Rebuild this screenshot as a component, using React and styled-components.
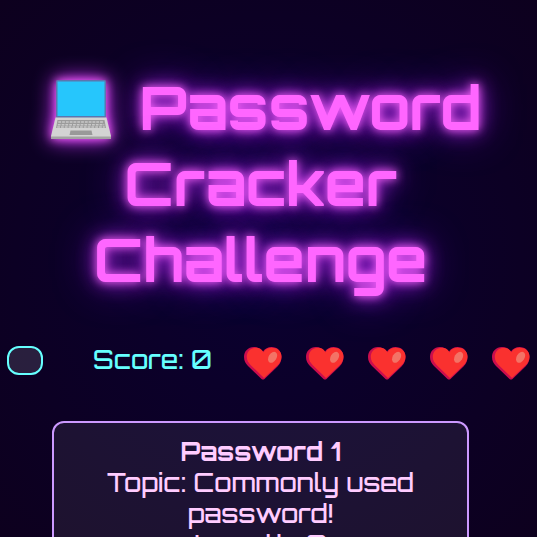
import React from "react";
import styled, { createGlobalStyle } from "styled-components";

const GlobalStyle = createGlobalStyle`
  html { background: #0d0020; }
  body { margin: 0; overflow: hidden; font-family: "Orbitron", "DejaVu Sans", sans-serif; }
  * { box-sizing: border-box; }
`;

const Page = styled.main`
  display: flex;
  flex-direction: column;
  align-items: center;
  height: 100vh;
  overflow: hidden;
  padding: 69px 16px 0 0;
  background: radial-gradient(circle at center, #0a0030 0%, #0d001e 100%);
`;

const Title = styled.h1`
  flex: none;
  width: 88%;
  margin: 0;
  font-size: 60px;
  line-height: 76px;
  font-weight: 700;
  text-align: center;
  color: #ff66ff;
  text-shadow: 0 0 10px #ff66ff, 0 0 20px #cc33ff, 0 0 40px #6600cc;
`;

const LaptopIcon = styled.svg`
  width: 60px;
  height: 60px;
  margin: 0 10px 0 12px;
  vertical-align: -9px;
  overflow: visible;
  filter: drop-shadow(0 0 5px #ff66ff) drop-shadow(0 0 10px #cc33ff);
`;

const StatusBar = styled.section`
  display: flex;
  flex: none;
  align-items: center;
  justify-content: center;
  height: 48px;
  margin-top: 39px;
  color: #66ffff;
`;

const Timer = styled.div`
  flex: none;
  width: 36px;
  height: 29px;
  margin-right: 50px;
  border: 2px solid #66ffff;
  border-radius: 12px;
  background: rgba(255, 255, 255, 0.12);
`;

const Score = styled.span`
  flex: none;
  margin-right: 32px;
  font-size: 25px;
  line-height: 32px;
  font-weight: 500;
  white-space: nowrap;
`;

const Lives = styled.div`
  display: flex;
  flex: none;
  gap: 24px;
  padding-top: 6px;
  margin-right: -16px;
`;

const HeartIcon = styled.svg`
  display: block;
  width: 38px;
  height: 33px;
`;

const Card = styled.section`
  flex: none;
  width: 80%;
  min-height: 240px;
  margin-top: 37px;
  padding: 13px 32px;
  border: 2px solid #cc99ff;
  border-radius: 12px;
  background: rgba(255, 255, 255, 0.07);
  color: #ffccff;
  font-size: 25px;
  line-height: 31px;
  font-weight: 500;
  text-align: center;
`;

const Line = styled.p`
  margin: 0;
`;

const lives = [1, 2, 3, 4, 5];

function Laptop() {
  return (
    <LaptopIcon viewBox="0 0 60 60" role="img" aria-label="Laptop">
      <rect x="5" y="1" width="50" height="38" rx="1.5" fill="#5b76ae" />
      <rect x="6.5" y="2.5" width="47" height="34.5" fill="#26c6fc" />
      <path d="M4.5 38.5H55.5L60 57V58.5Q60 60 58.5 60H1.5Q0 60 0 58.5V57Z" fill="#d3d3d3" />
      <path d="M0 57.5H60V58.5Q60 60 58.5 60H1.5Q0 60 0 58.5Z" fill="#a3a3a3" />
      <path d="M6.5 41H53.5L55 49H5Z" fill="#9b9b9b" />
      <path
        d="M7.3 43H52.7M6.8 45.7H53.2M6.2 48H53.8"
        stroke="#c9c9c9"
        strokeWidth="1.6"
        strokeDasharray="2.8 1"
      />
      <path d="M19.5 51.5H40.5L41.5 56H18.5Z" fill="#999" />
    </LaptopIcon>
  );
}

function Heart() {
  return (
    <HeartIcon viewBox="0 0 38 33" role="img" aria-label="Life">
      <path
        d="M10 0C4 0 0 4.4 0 10C0 14 1.6 16.5 4 19L17.5 32Q19 33.2 20.5 32L33.5 19.5C36 17 37.5 14 37.5 10C37.5 4 33.5 0 27.5 0C24 0 21 1.5 19 4.5C17 1.5 13.5 0 10 0Z"
        fill="#cb0d4d"
      />
      <path
        d="M12 .8C6.3 .8 2.8 5 2.8 9.8C2.8 13.6 4.4 15.8 6.8 18.2L20 31L33.3 18.6C35.8 16.1 37.5 13.5 37.5 9.8C37.5 4.2 33.5 .8 27.5 .8C24 .8 21.5 2 19.5 5.2C17.5 2.3 15.3 .8 12 .8Z"
        fill="#fa312f"
      />
      <ellipse cx="28.6" cy="10.3" rx="4" ry="6" transform="rotate(31 28.6 10.3)" fill="#f37366" />
    </HeartIcon>
  );
}

export default function App() {
  return (
    <>
      <GlobalStyle />
      <Page>
        <Title><Laptop /> Password Cracker Challenge</Title>
        <StatusBar>
          <Timer role="timer" aria-label="Time left" />
          <Score>Score: 0</Score>
          <Lives>
            {lives.map((life) => (
              <Heart key={life} />
            ))}
          </Lives>
        </StatusBar>
        <Card>
          <Line><strong>Password 1</strong></Line>
          <Line>Topic: Commonly used password!</Line>
          <Line>Length: 8</Line>
        </Card>
      </Page>
    </>
  );
}
